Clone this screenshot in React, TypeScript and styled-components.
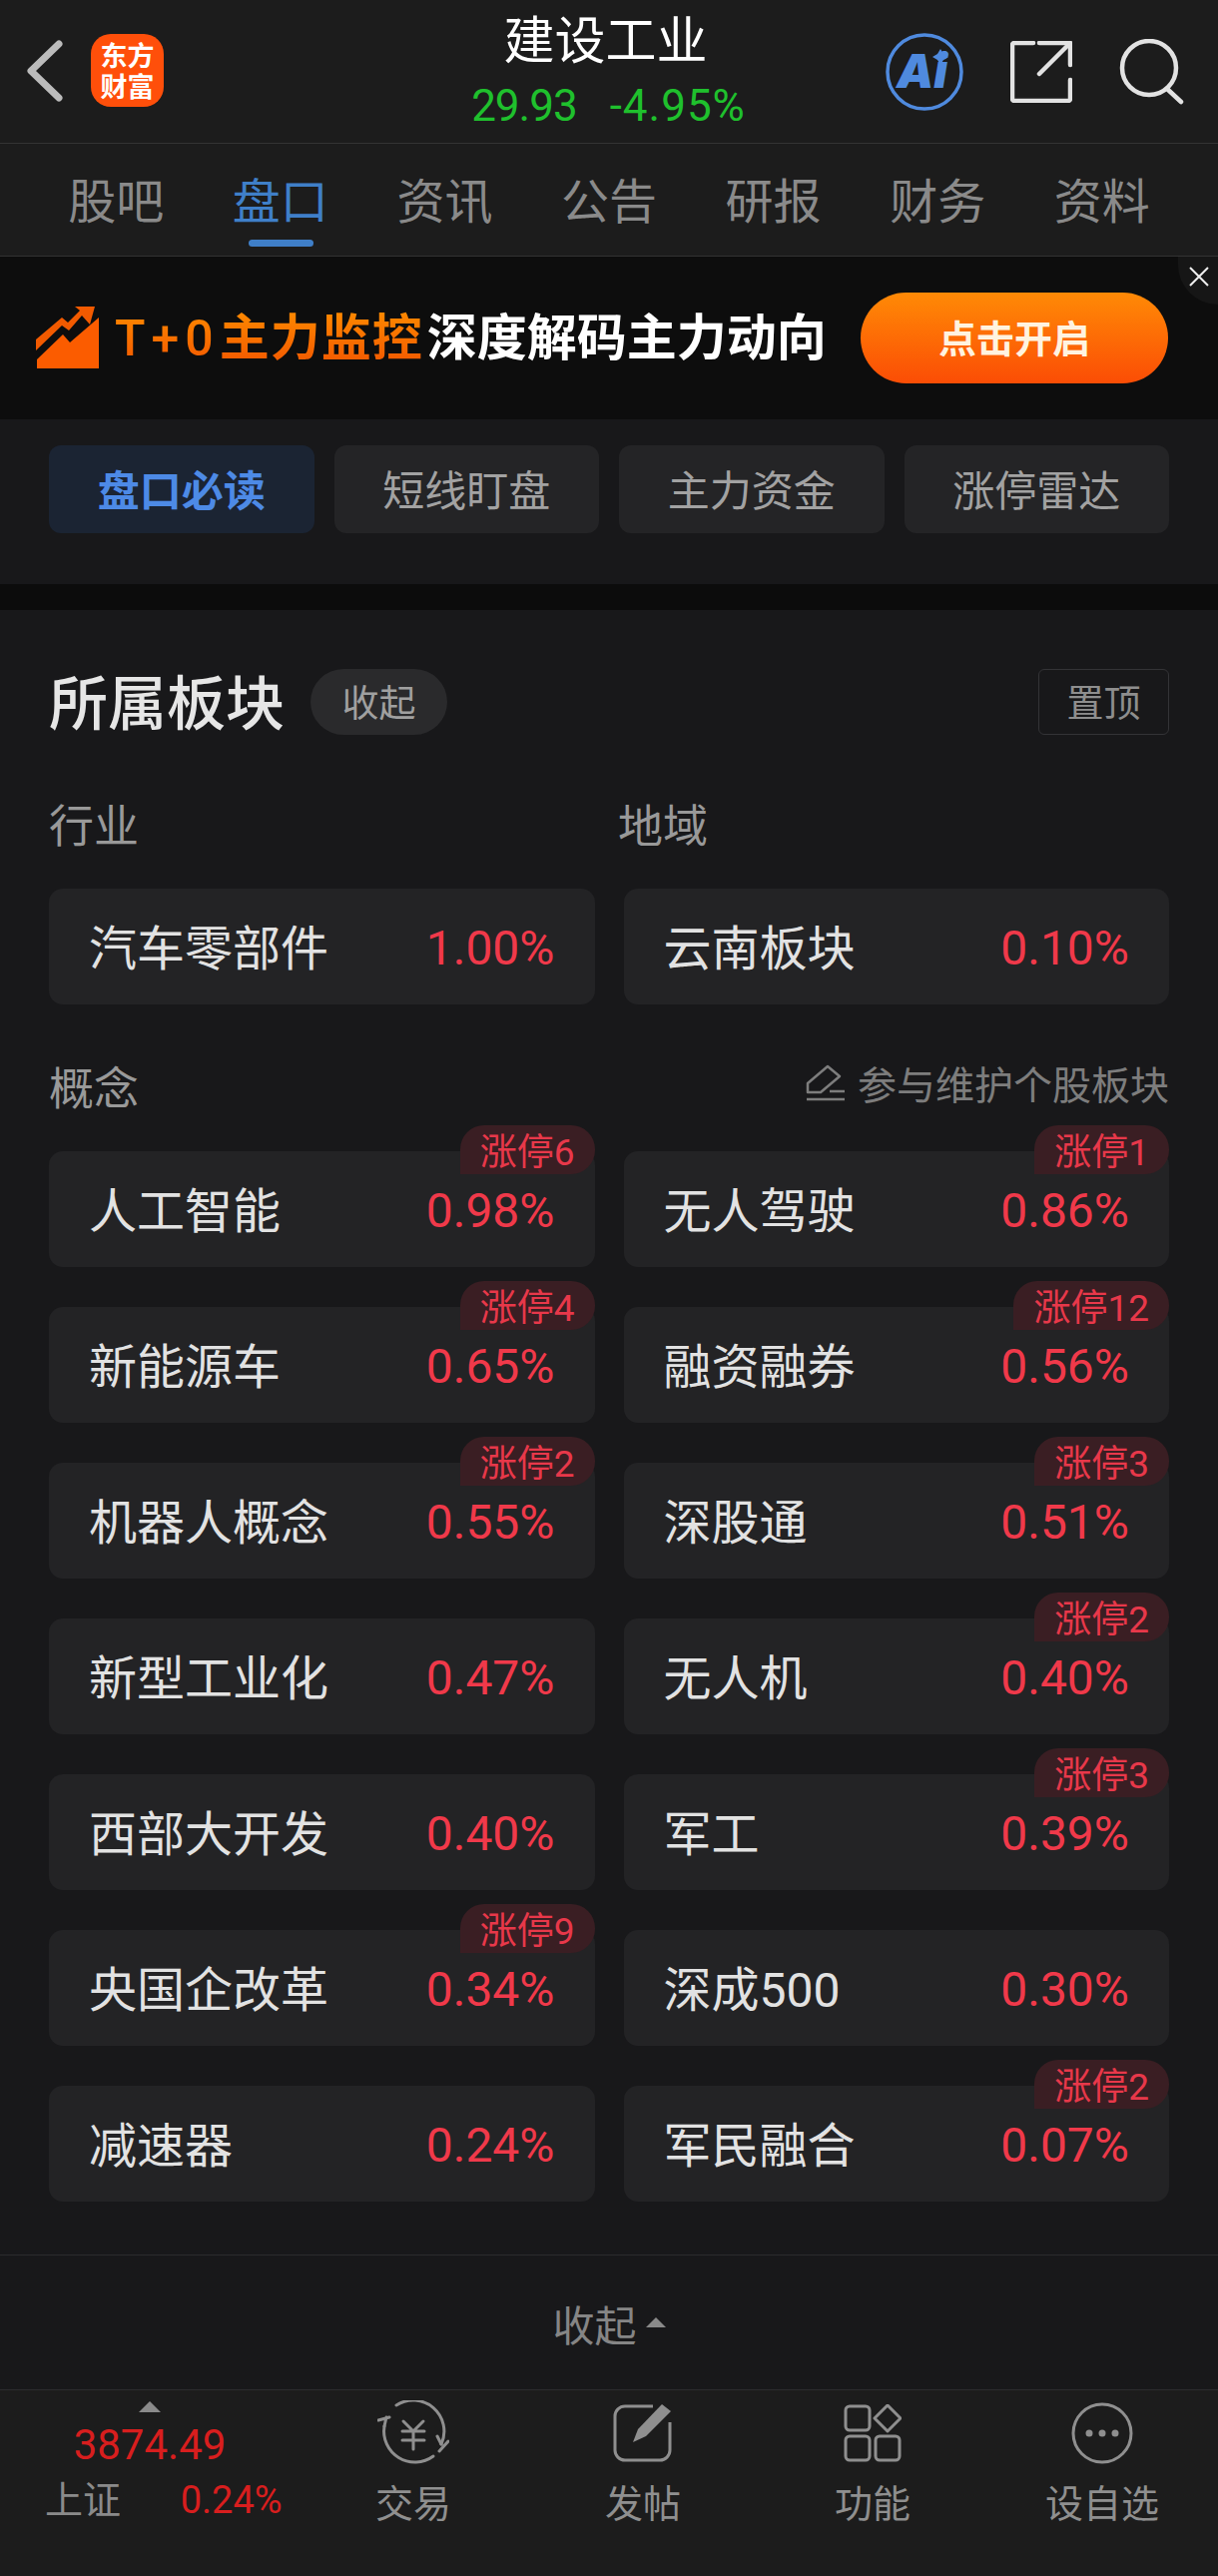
import React from 'react';
import styled, { createGlobalStyle } from 'styled-components';

const FONT = `Roboto, "Noto Sans CJK SC", sans-serif`;

const GlobalStyle = createGlobalStyle`
  html, body {
    margin: 0;
    padding: 0;
    background: #0c0c0c;
    font-family: ${FONT};
  }
  * {
    box-sizing: border-box;
  }
`;

const Page = styled.div`
  width: 1220px;
  height: 2580px;
  overflow: hidden;
  background: #0c0c0c;
`;

// header
const Header = styled.header`
  height: 144px;
  display: grid;
  grid-template-columns: 1fr auto 1fr;
  align-items: center;
  padding: 0 33px 0 26px;
  background: #1c1c1c;
  border-bottom: 1px solid #333;
`;

const HeaderLeft = styled.div`
  display: flex;
  align-items: center;
  gap: 25px;
  margin-bottom: 2px;
`;

const Logo = styled.div`
  width: 73px;
  height: 73px;
  padding: 5px 9px 0;
  border-radius: 20px;
  background: #ff4f0a;
  color: #fff;
  font-size: 27px;
  font-weight: 700;
  line-height: 31px;
  text-align: center;
  font-family: "Noto Sans CJK SC", sans-serif;
`;

const TitleBlock = styled.div`
  display: flex;
  flex-direction: column;
  align-items: center;
`;

const Title = styled.div`
  color: #fff;
  font-size: 51px;
  line-height: 66px;
`;

const Quote = styled.div`
  color: #1fc02d;
  font-size: 44px;
  line-height: 58px;
  margin: 2px 0 0 6px;
  display: flex;
  gap: 33px;
`;

const Price = styled.span`
  letter-spacing: -1px;
`;

const Change = styled.span`
  letter-spacing: 1px;
`;

const HeaderRight = styled.div`
  display: flex;
  align-items: center;
  justify-content: flex-end;
  gap: 47px;
`;

// tabs
const TabBar = styled.nav`
  height: 113px;
  padding: 0 34px;
  display: grid;
  grid-template-columns: repeat(7, 1fr);
  background: #1c1c1c;
  border-bottom: 1px solid #333;
`;

const Tab = styled.div<{ $active?: boolean }>`
  position: relative;
  display: flex;
  align-items: center;
  justify-content: center;
  padding-bottom: 5px;
  font-size: 48px;
  color: ${({ $active }) => ($active ? '#3f7fc8' : '#8a8a8a')};

  &::after {
    content: '';
    display: ${({ $active }) => ($active ? 'block' : 'none')};
    position: absolute;
    left: 50%;
    bottom: 9px;
    width: 65px;
    height: 7px;
    margin-left: -32px;
    border-radius: 4px;
    background: #3f7fc8;
  }
`;

// ad banner
const Banner = styled.div`
  position: relative;
  height: 163px;
  padding: 0 50px 0 36px;
  display: flex;
  align-items: center;
  background: #0d0d0d;
`;

const BannerText = styled.div`
  margin: 0 0 5px 15px;
  display: flex;
  font-size: 50px;
  font-weight: 700;
  line-height: 60px;
  color: #fff;
  font-family: "Noto Sans CJK SC", sans-serif;
`;

const BannerHot = styled.span`
  margin-right: 4px;
  letter-spacing: 1px;
  background: linear-gradient(180deg, #ff8f00, #f25500);
  -webkit-background-clip: text;
  background-clip: text;
  color: transparent;
`;

const Plus = styled.span`
  font-family: Roboto, sans-serif;
  font-weight: 500;
  letter-spacing: 6px;
`;

const BannerButton = styled.div`
  margin-left: auto;
  width: 308px;
  height: 91px;
  padding-bottom: 5px;
  border-radius: 46px;
  display: flex;
  align-items: center;
  justify-content: center;
  color: #fff3e0;
  font-size: 38px;
  font-weight: 700;
  background: linear-gradient(180deg, #ff8a06, #fb4d05);
`;

const CloseCorner = styled.div`
  position: absolute;
  top: 0;
  right: 0;
  width: 40px;
  height: 48px;
  background: #161616;
  border-bottom-left-radius: 40px;
  display: flex;
  align-items: flex-start;
  justify-content: flex-end;
  padding: 9px 8px 0 0;
`;

// sub tabs
const SubTabs = styled.div`
  height: 165px;
  padding: 26px 49px 0;
  display: grid;
  grid-template-columns: repeat(4, 1fr);
  grid-auto-rows: 88px;
  column-gap: 20px;
  background: #18181a;
`;

const SubTab = styled.div<{ $active?: boolean }>`
  display: flex;
  align-items: center;
  justify-content: center;
  padding-bottom: 4px;
  border-radius: 12px;
  font-size: 42px;
  font-weight: ${({ $active }) => ($active ? 700 : 400)};
  color: ${({ $active }) => ($active ? '#4d8ae6' : '#a2a2a2')};
  background: ${({ $active }) => ($active ? '#1b2433' : '#242426')};
`;

// sectors panel
const Panel = styled.section`
  margin-top: 26px;
  padding: 59px 49px 53px;
  background: #18181a;
`;

const PanelHead = styled.div`
  height: 66px;
  display: flex;
  align-items: center;
`;

const PanelTitle = styled.h2`
  margin: -5px 0 0;
  color: #e6e6e6;
  font-size: 59px;
  font-weight: 500;
`;

const FoldPill = styled.div`
  margin-left: 26px;
  width: 137px;
  height: 66px;
  padding-bottom: 3px;
  border-radius: 33px;
  background: #2a2a2c;
  color: #a0a0a0;
  font-size: 37px;
  display: flex;
  align-items: center;
  justify-content: center;
`;

const PinButton = styled.div`
  margin-left: auto;
  width: 131px;
  height: 66px;
  padding-bottom: 3px;
  border: 1px solid #333336;
  border-radius: 6px;
  color: #8e8e8e;
  font-size: 37px;
  display: flex;
  align-items: center;
  justify-content: center;
`;

const LabelRow = styled.div<{ $top: number; $bottom: number }>`
  height: 60px;
  margin: ${({ $top, $bottom }) => `${$top}px 0 ${$bottom}px`};
  display: flex;
  align-items: center;
  color: #999;
  font-size: 45px;
`;

const LabelCell = styled.div`
  width: 570px;
`;

const MaintainLink = styled.div`
  margin-left: auto;
  display: flex;
  align-items: center;
  gap: 12px;
  color: #7d7d7d;
  font-size: 39px;
  margin-top: -6px;
`;

const CardGrid = styled.div`
  display: grid;
  grid-template-columns: 1fr 1fr;
  column-gap: 29px;
  row-gap: 40px;
`;

const Card = styled.div`
  position: relative;
  height: 116px;
  padding: 0 40px;
  display: flex;
  align-items: center;
  justify-content: space-between;
  border-radius: 14px;
  background: #232325;
`;

const CardName = styled.span`
  margin-top: -5px;
  color: #e2e2e2;
  font-size: 48px;
`;

const CardPct = styled.span`
  margin-top: 2px;
  color: #f0394a;
  font-size: 48px;
`;

const LimitBadge = styled.span`
  position: absolute;
  top: -26px;
  right: 0;
  height: 49px;
  padding: 0 20px 2px;
  display: flex;
  align-items: center;
  border-radius: 24px 24px 24px 0;
  background: #3a1e23;
  color: #e8384a;
  font-size: 37px;
`;

const FoldRow = styled.div`
  height: 135px;
  display: flex;
  align-items: center;
  justify-content: center;
  gap: 9px;
  background: #18181a;
  border-top: 1px solid #2c2c2e;
  color: #858585;
  font-size: 42px;
`;

const UpMark = styled.i<{ $size: number }>`
  display: block;
  width: 0;
  height: 0;
  border-left: ${({ $size }) => $size}px solid transparent;
  border-right: ${({ $size }) => $size}px solid transparent;
  border-bottom: ${({ $size }) => $size}px solid #8a8a8a;
`;

// footer
const Footer = styled.footer`
  height: 187px;
  display: grid;
  grid-template-columns: 299px repeat(4, 230px);
  background: #1c1c1c;
  border-top: 1px solid #2c2c2e;
`;

const IndexBox = styled.div`
  display: grid;
  grid-template-columns: auto auto;
  justify-content: space-between;
  align-content: start;
  padding: 11px 14px 0 45px;
`;

const IndexArrow = styled.div`
  grid-column: 1 / 3;
  display: flex;
  justify-content: center;
  padding-right: 30px;
`;

const IndexValue = styled.div`
  grid-column: 1 / 3;
  margin-top: 8px;
  text-align: center;
  padding-right: 30px;
  color: #d81e1e;
  font-size: 42px;
  line-height: 50px;
`;

const IndexName = styled.span`
  margin-top: 6px;
  color: #8a8a8a;
  font-size: 38px;
  line-height: 48px;
`;

const IndexPct = styled.span`
  margin-top: 6px;
  color: #d81e1e;
  font-size: 38px;
  line-height: 48px;
`;

const FootItem = styled.div`
  display: flex;
  flex-direction: column;
  align-items: center;
  padding-top: 10px;
`;

const IconSlot = styled.div`
  height: 66px;
  display: flex;
  align-items: center;
  justify-content: center;
`;

const FootLabel = styled.span`
  margin-top: 12px;
  color: #8f8f8f;
  font-size: 38px;
  line-height: 52px;
`;

type Sector = { name: string; pct: string; limit?: number };

const concepts: Sector[] = [
  { name: '人工智能', pct: '0.98%', limit: 6 },
  { name: '无人驾驶', pct: '0.86%', limit: 1 },
  { name: '新能源车', pct: '0.65%', limit: 4 },
  { name: '融资融券', pct: '0.56%', limit: 12 },
  { name: '机器人概念', pct: '0.55%', limit: 2 },
  { name: '深股通', pct: '0.51%', limit: 3 },
  { name: '新型工业化', pct: '0.47%' },
  { name: '无人机', pct: '0.40%', limit: 2 },
  { name: '西部大开发', pct: '0.40%' },
  { name: '军工', pct: '0.39%', limit: 3 },
  { name: '央国企改革', pct: '0.34%', limit: 9 },
  { name: '深成500', pct: '0.30%' },
  { name: '减速器', pct: '0.24%' },
  { name: '军民融合', pct: '0.07%', limit: 2 },
];

const tabs = ['股吧', '盘口', '资讯', '公告', '研报', '财务', '资料'];
const subTabs = ['盘口必读', '短线盯盘', '主力资金', '涨停雷达'];

const SectorCard: React.FC<Sector> = ({ name, pct, limit }) => (
  <Card>
    <CardName>{name}</CardName>
    <CardPct>{pct}</CardPct>
    {limit ? <LimitBadge>涨停{limit}</LimitBadge> : null}
  </Card>
);

const BackIcon = () => (
  <svg width="40" height="62" viewBox="0 0 40 62" fill="none">
    <path d="M33 4 L5 31 L33 58" stroke="#bbb" strokeWidth="7" strokeLinecap="round" strokeLinejoin="round" />
  </svg>
);

const AiIcon = () => (
  <svg width="78" height="78" viewBox="0 0 78 78" fill="none">
    <circle cx="39" cy="39" r="37" stroke="#4f8ade" strokeWidth="3.5" />
    <text x="11" y="55" fill="#4f8ade" fontFamily="Inter, sans-serif" fontSize="47" fontWeight="900" fontStyle="italic">
      Ai
    </text>
    <path d="M55 16 L58 21 L63 24 L58 27 L55 32 L52 27 L47 24 L52 21 Z" fill="#4f8ade" />
  </svg>
);

const ShareIcon = () => (
  <svg width="62" height="62" viewBox="0 0 62 62" fill="none" stroke="#e2e2e2" strokeWidth="4.5" strokeLinecap="round" strokeLinejoin="round">
    <path d="M23 2 H4 a2 2 0 0 0 -2 2 V58 a2 2 0 0 0 2 2 H58 a2 2 0 0 0 2 -2 V39" />
    <path d="M29 2 H60 V24" />
    <path d="M59 3 L29 33" />
  </svg>
);

const SearchIcon = () => (
  <svg width="66" height="66" viewBox="0 0 66 66" fill="none" stroke="#e2e2e2" strokeWidth="4.5" strokeLinecap="round">
    <circle cx="30" cy="29" r="27" />
    <path d="M48 50 L62 63" />
  </svg>
);

const FlameChartIcon = () => (
  <svg width="64" height="63" viewBox="0 0 64 63">
    <path d="M0 33 L26 11 L32 16 L44 4 L39 0 L59 0 L54 18 L46 9 L33 24 L26 19 L0 44 Z" fill="#f25a00" />
    <path d="M1 53 L27 28 L34 36 L63 11 V62 H1 Z" fill="#fb5c00" />
  </svg>
);

const CloseIcon = () => (
  <svg width="22" height="22" viewBox="0 0 22 22" stroke="#eee" strokeWidth="2" fill="none">
    <path d="M2 2 L20 20 M20 2 L2 20" />
  </svg>
);

const EditIcon = () => (
  <svg width="40" height="37" viewBox="0 0 40 37" fill="none" stroke="#7d7d7d" strokeWidth="2.5" strokeLinejoin="round">
    <path d="M2 19 L22 2 L34 12 L15 28 H2 Z" />
    <path d="M1 35 H39 M24 27 H39" />
  </svg>
);

const TradeIcon = () => (
  <svg width="72" height="66" viewBox="0 0 72 66" fill="none" stroke="#8f8f8f" strokeWidth="3" strokeLinecap="round" strokeLinejoin="round">
    <path d="M19 5 A31 31 0 0 1 64 44" />
    <path d="M62 51 L71 41 M64 44 L60 36" />
    <path d="M56 56 A31 31 0 0 1 7 26" />
    <path d="M1 20 L12 17 M7 26 L9 17" />
    <path d="M26 21 L36 31 L46 21 M25 31 H47 M25 40 H47 M36 31 V49" />
  </svg>
);

const NoteIcon = () => (
  <svg width="60" height="60" viewBox="0 0 60 60" fill="none">
    <path d="M40 3 H12 a10 10 0 0 0 -10 10 V47 a10 10 0 0 0 10 10 H47 a10 10 0 0 0 10 -10 V19" stroke="#8f8f8f" strokeWidth="3" />
    <path d="M20 39 L25 26 L49 1 L58 8 L33 33 Z" fill="#8f8f8f" />
  </svg>
);

const GridIcon = () => (
  <svg width="58" height="58" viewBox="0 0 58 58" fill="none" stroke="#8f8f8f" strokeWidth="3" strokeLinejoin="round">
    <rect x="2" y="2" width="24" height="24" rx="4" />
    <rect x="2" y="32" width="24" height="24" rx="4" />
    <rect x="32" y="32" width="24" height="24" rx="4" />
    <path d="M44 1 L57 14 L44 27 L31 14 Z" />
  </svg>
);

const MoreIcon = () => (
  <svg width="62" height="62" viewBox="0 0 62 62" fill="none">
    <circle cx="31" cy="31" r="29" stroke="#8f8f8f" strokeWidth="3" />
    <circle cx="18" cy="31" r="3.5" fill="#8f8f8f" />
    <circle cx="31" cy="31" r="3.5" fill="#8f8f8f" />
    <circle cx="44" cy="31" r="3.5" fill="#8f8f8f" />
  </svg>
);

const App: React.FC = () => (
  <Page>
    <GlobalStyle />
    <Header>
      <HeaderLeft>
        <BackIcon />
        <Logo>东方财富</Logo>
      </HeaderLeft>
      <TitleBlock>
        <Title>建设工业</Title>
        <Quote>
          <Price>29.93</Price>
          <Change>-4.95%</Change>
        </Quote>
      </TitleBlock>
      <HeaderRight>
        <AiIcon />
        <ShareIcon />
        <SearchIcon />
      </HeaderRight>
    </Header>

    <TabBar>
      {tabs.map((t) => (
        <Tab key={t} $active={t === '盘口'}>
          {t}
        </Tab>
      ))}
    </TabBar>

    <Banner>
      <FlameChartIcon />
      <BannerText>
        <BannerHot>
          <Plus>T+0</Plus>主力监控
        </BannerHot>
        深度解码主力动向
      </BannerText>
      <BannerButton>点击开启</BannerButton>
      <CloseCorner>
        <CloseIcon />
      </CloseCorner>
    </Banner>

    <SubTabs>
      {subTabs.map((t, i) => (
        <SubTab key={t} $active={i === 0}>
          {t}
        </SubTab>
      ))}
    </SubTabs>

    <Panel>
      <PanelHead>
        <PanelTitle>所属板块</PanelTitle>
        <FoldPill>收起</FoldPill>
        <PinButton>置顶</PinButton>
      </PanelHead>

      <LabelRow $top={58} $bottom={36}>
        <LabelCell>行业</LabelCell>
        <span>地域</span>
      </LabelRow>
      <CardGrid>
        <SectorCard name="汽车零部件" pct="1.00%" />
        <SectorCard name="云南板块" pct="0.10%" />
      </CardGrid>

      <LabelRow $top={51} $bottom={36}>
        <span>概念</span>
        <MaintainLink>
          <EditIcon />
          参与维护个股板块
        </MaintainLink>
      </LabelRow>
      <CardGrid>
        {concepts.map((c) => (
          <SectorCard key={c.name} {...c} />
        ))}
      </CardGrid>
    </Panel>

    <FoldRow>
      收起
      <UpMark $size={10} />
    </FoldRow>

    <Footer>
      <IndexBox>
        <IndexArrow>
          <UpMark $size={11} />
        </IndexArrow>
        <IndexValue>3874.49</IndexValue>
        <IndexName>上证</IndexName>
        <IndexPct>0.24%</IndexPct>
      </IndexBox>
      <FootItem>
        <IconSlot><TradeIcon /></IconSlot>
        <FootLabel>交易</FootLabel>
      </FootItem>
      <FootItem>
        <IconSlot><NoteIcon /></IconSlot>
        <FootLabel>发帖</FootLabel>
      </FootItem>
      <FootItem>
        <IconSlot><GridIcon /></IconSlot>
        <FootLabel>功能</FootLabel>
      </FootItem>
      <FootItem>
        <IconSlot><MoreIcon /></IconSlot>
        <FootLabel>设自选</FootLabel>
      </FootItem>
    </Footer>
  </Page>
);

export default App;
